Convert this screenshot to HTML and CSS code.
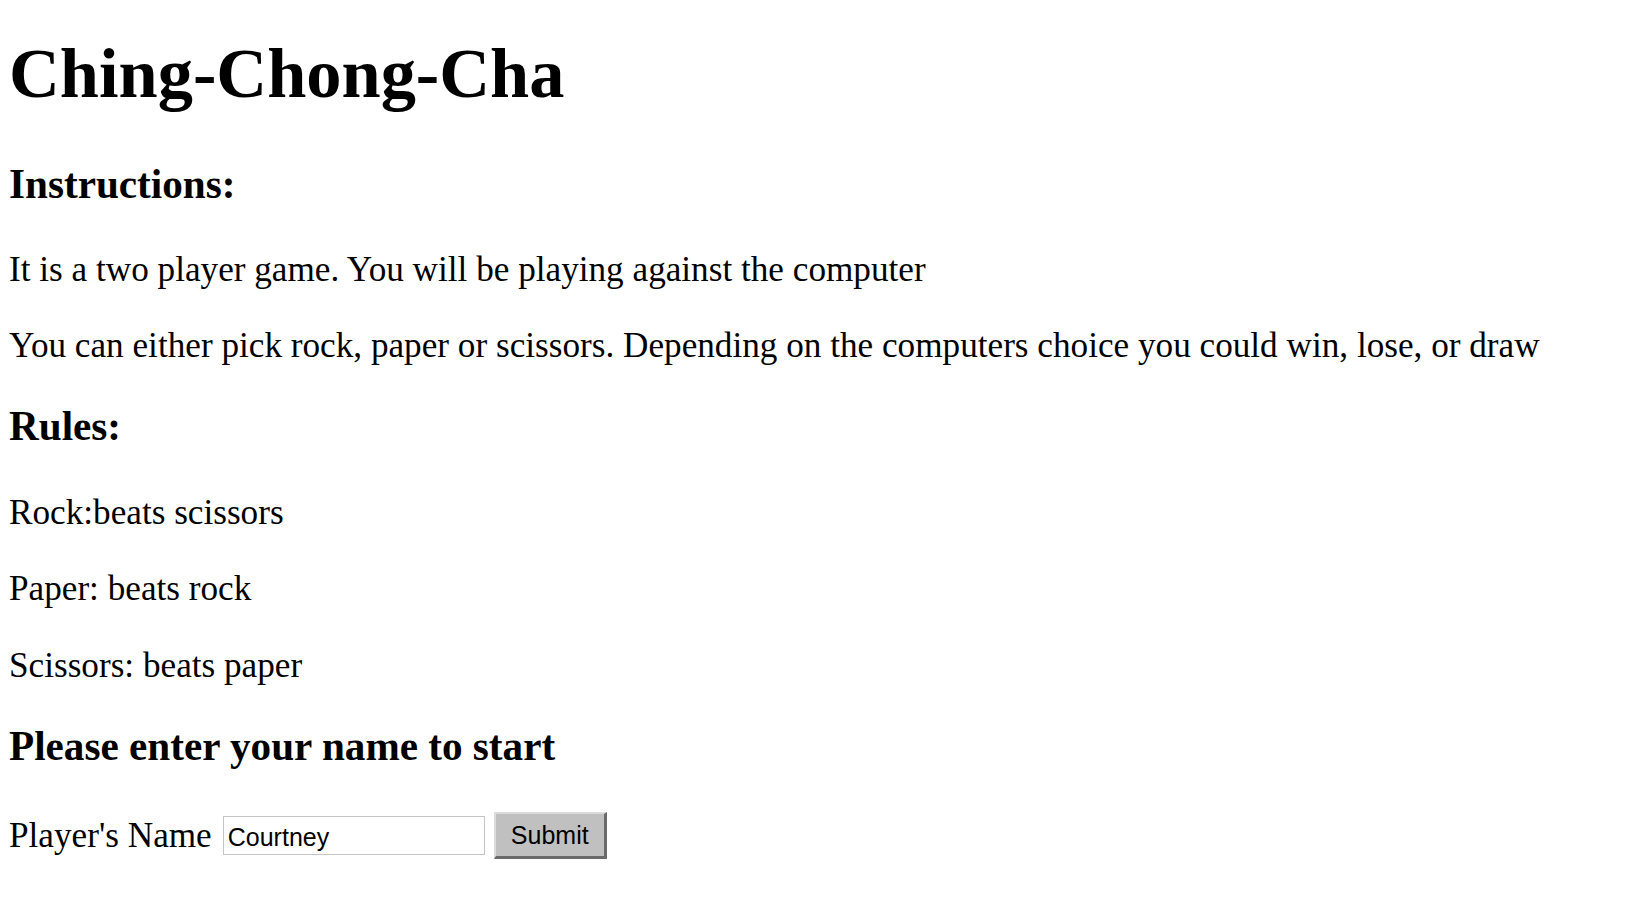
FILE: index.html
```html
<!DOCTYPE html>
<html lang="en">
<head>
<meta charset="utf-8">
<title>Ching-Chong-Cha</title>
<link rel="stylesheet" href="styles.css">
</head>
<body>
  <h1 class="title">Ching-Chong-Cha</h1>
  <h3 class="section">Instructions:</h3>
  <p class="text">It is a two player game. You will be playing against the computer</p>
  <p class="text">You can either pick rock, paper or scissors. Depending on the computers choice you could win, lose, or draw</p>
  <h3 class="section">Rules:</h3>
  <p class="text">Rock:beats scissors</p>
  <p class="text rule">Paper: beats rock</p>
  <p class="text rule">Scissors: beats paper</p>
  <h3 class="section">Please enter your name to start</h3>
  <form class="form">
    <label class="label" for="name">Player's Name</label>
    <input class="field" id="name" type="text" value="Courtney">
    <button class="submit" type="button">Submit</button>
  </form>
</body>
</html>
```
FILE: styles.css
```css
html, body {
  background: #fff;
}
body {
  margin: 0;
  padding: 0 0 0 9px;
  font-family: "Liberation Serif", "Times New Roman", serif;
  font-size: 35.2px;
  line-height: 1.15;
  color: #000;
}
.title {
  font-size: 2em;
  font-weight: bold;
  margin: 33px 0 47px;
  line-height: 1.15;
}
.section {
  font-size: 1.17em;
  font-weight: bold;
  margin: 37px 0 42px;
}
.text {
  margin: 35px 0;
}
.rule {
  margin-top: 36px;
}
.form {
  display: flex;
  align-items: center;
  margin: 0;
}
.label {
  margin-right: 11px;
}
.field {
  box-sizing: border-box;
  width: 262px;
  height: 39px;
  margin: 0;
  padding: 3px 4px 0;
  border: 1px solid #c4c4c4;
  font-family: "Liberation Sans", Arial, sans-serif;
  font-size: 25px;
  color: #000;
  background: #fff;
  outline: none;
}
.submit {
  box-sizing: border-box;
  width: 113px;
  height: 47px;
  margin: 0 0 0 9px;
  padding: 1px 0 0;
  background: #c0c0c0;
  border-style: solid;
  border-width: 2px 3px 3px 2px;
  border-color: #dcdcdc #6a6a6a #6a6a6a #dcdcdc;
  font-family: "Liberation Sans", Arial, sans-serif;
  font-size: 25px;
  color: #000;
}
```
